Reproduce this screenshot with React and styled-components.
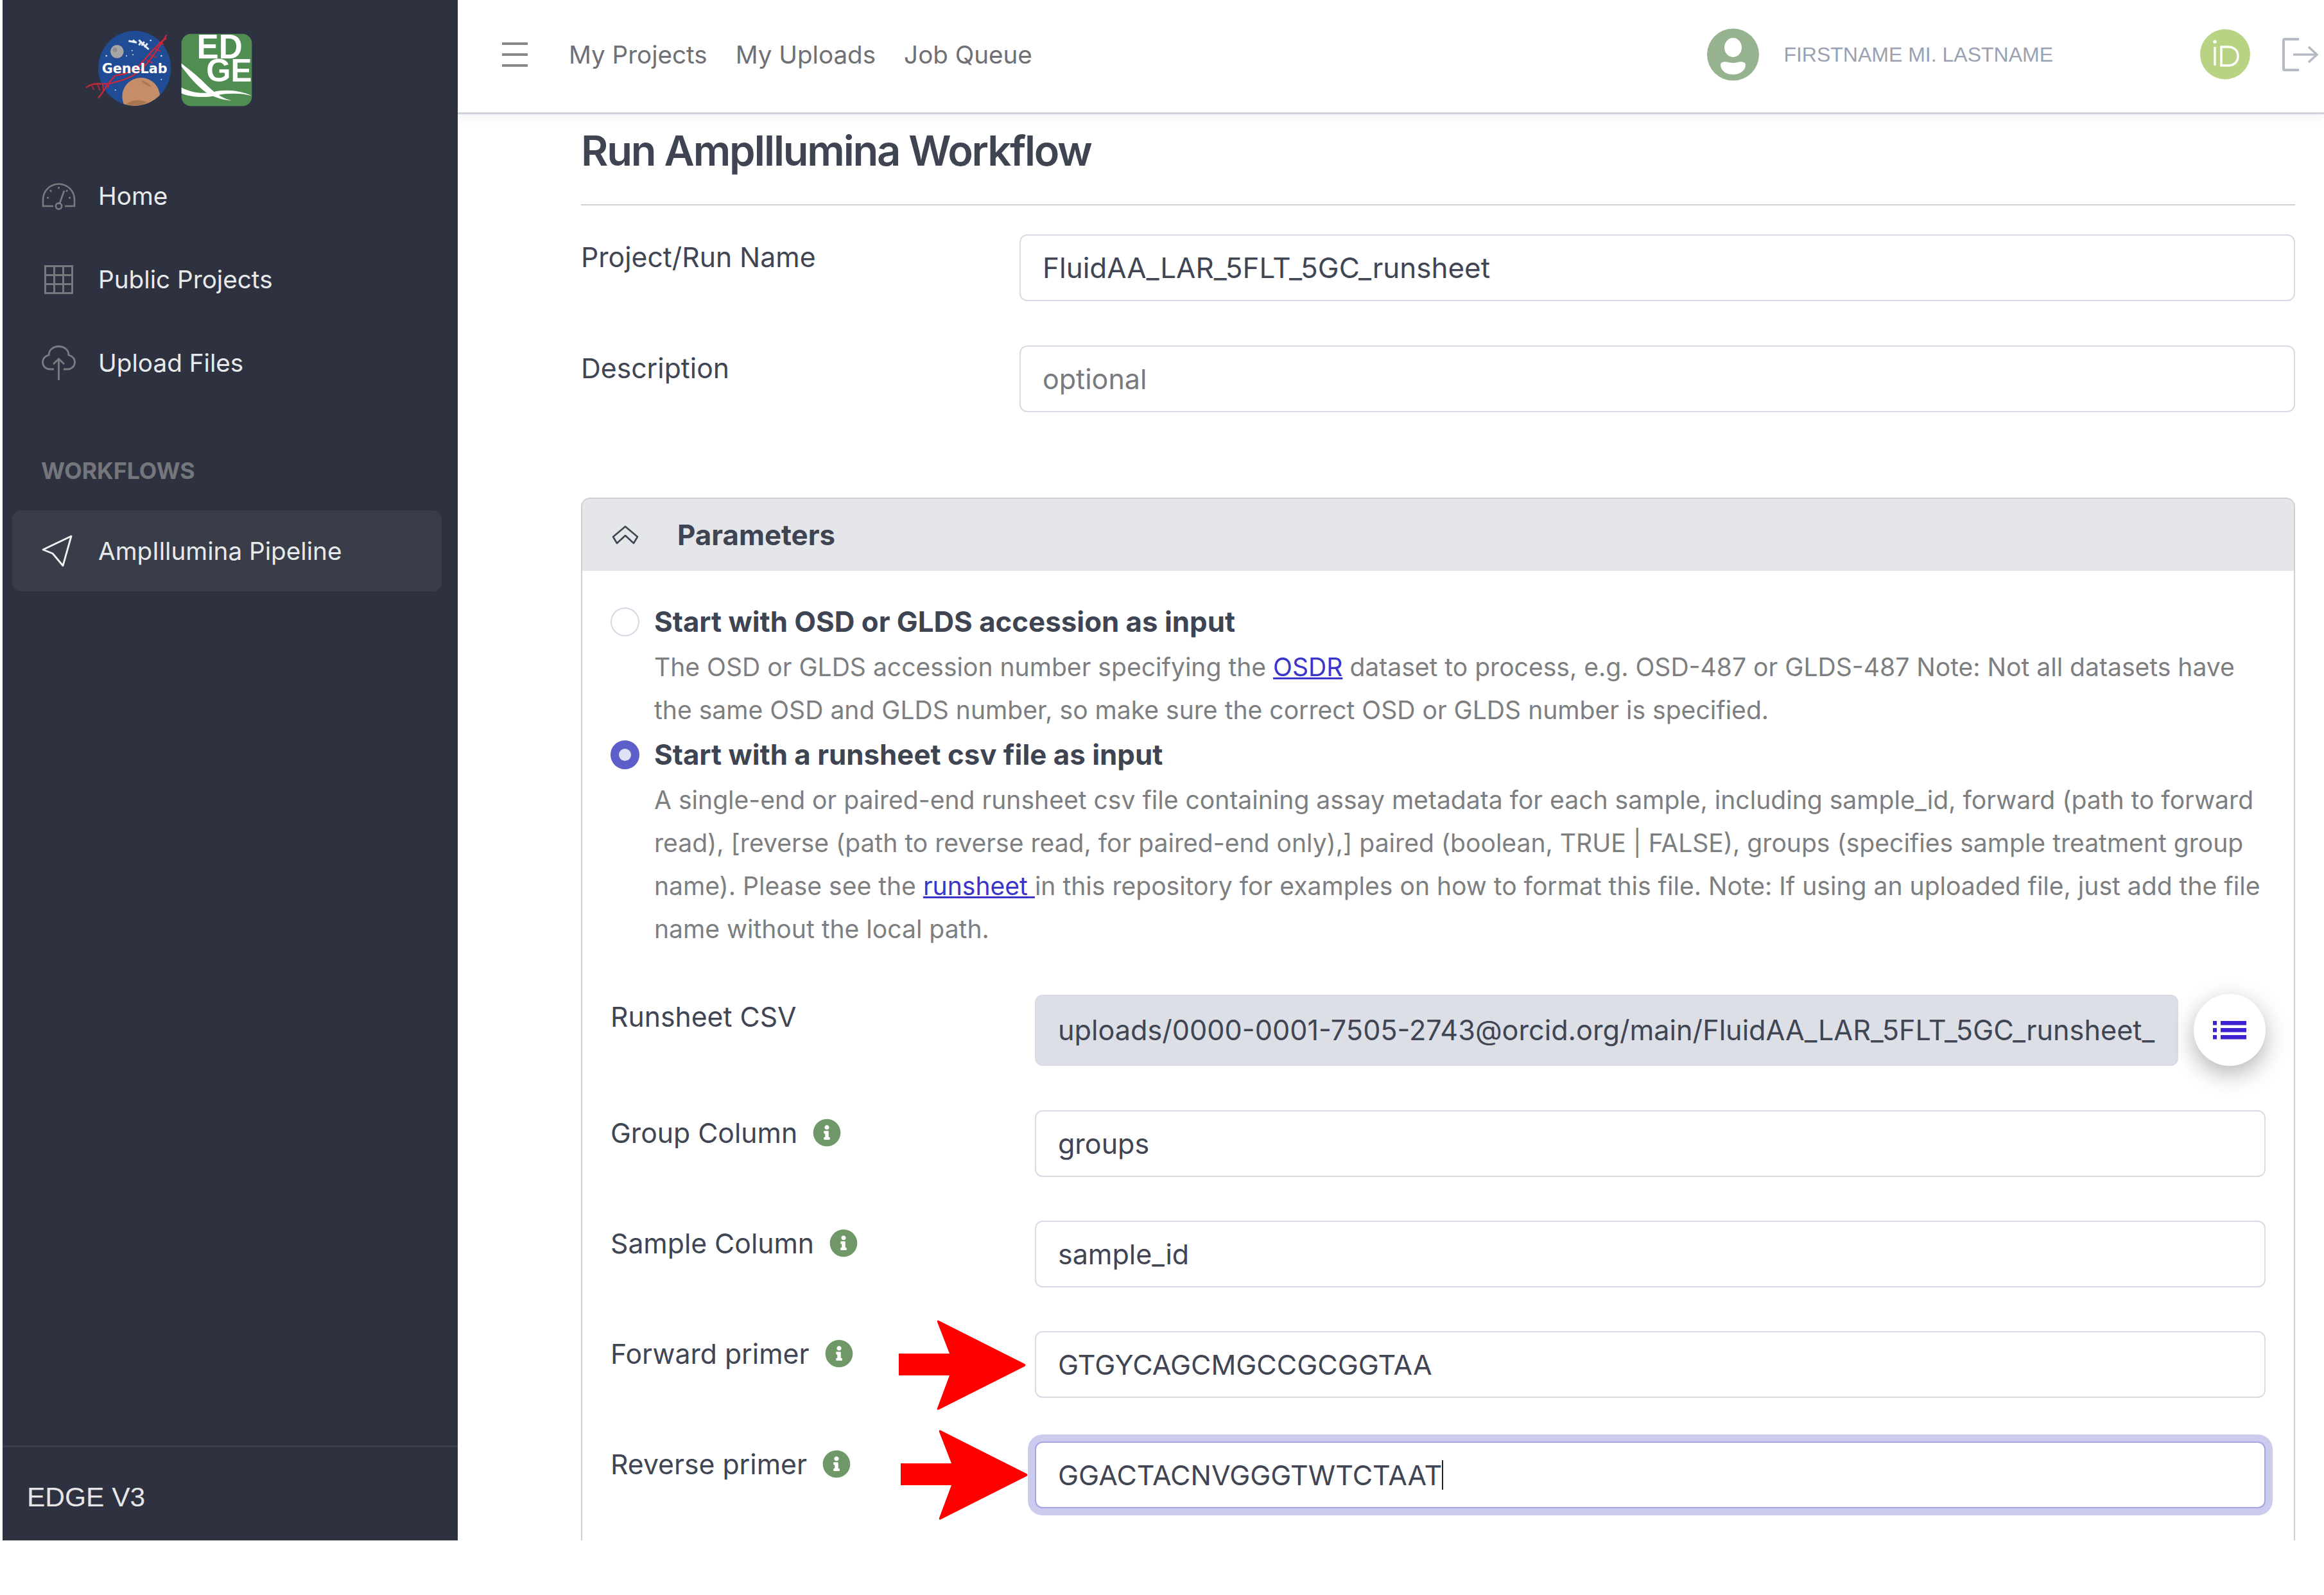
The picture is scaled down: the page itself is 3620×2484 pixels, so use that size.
import React from "react";
import styled, { createGlobalStyle } from "styled-components";
import { FaInfoCircle } from "react-icons/fa";

const Global = createGlobalStyle`
  html, body { margin: 0; padding: 0; background: #fff; }
  body { font-family: Inter, "Liberation Sans", sans-serif; }
`;

const Shell = styled.div`
  display: flex;
  height: 2399px;
  width: 3616px;
  margin-left: 4px;
  overflow: hidden;
`;

const Sidebar = styled.aside`
  width: 709px;
  flex: none;
  background: #2e3240;
  display: flex;
  flex-direction: column;
`;

const LogoRow = styled.div`
  display: flex;
  align-items: flex-start;
  gap: 14px;
  padding: 47px 0 0 129px;
  height: 195px;
  box-sizing: border-box;
`;

const EdgeLogoSvg = styled.svg`
  margin-top: 5px;
`;

const NavList = styled.nav`
  display: flex;
  flex-direction: column;
  gap: 4px;
  padding: ${(p) => (p.$flush ? 0 : 47)}px 25px 0 15px;
`;

const NavItem = styled.div`
  height: 126px;
  display: flex;
  align-items: center;
  gap: 35px;
  padding-left: 46px;
  border-radius: 14px;
  font-size: 38.7px;
  color: #e8e9eb;
  background: ${(p) => (p.$active ? "#383d49" : "transparent")};
`;

const NavIcon = styled.span`
  width: 53px;
  flex: none;
  display: flex;
  justify-content: ${(p) => p.$align || "center"};
`;

const SectionTitle = styled.div`
  font-size: 35.7px;
  font-weight: 700;
  color: #74767c;
  line-height: 40px;
  padding: 85px 0 42px 60px;
`;

const SidebarFooter = styled.div`
  margin-top: auto;
  height: 148px;
  box-sizing: border-box;
  border-top: 3px solid #3a3f4d;
  padding: 10px 0 0 38px;
  display: flex;
  align-items: center;
  font-family: "Liberation Sans", sans-serif;
  font-size: 42.5px;
  color: #e6e6e8;
`;

const Main = styled.main`
  flex: 1;
  min-width: 0;
  display: flex;
  flex-direction: column;
`;

const TopBar = styled.header`
  height: 178px;
  box-sizing: border-box;
  flex: none;
  border-bottom: 3px solid #cdd2dc;
  box-shadow: 0 6px 18px rgba(0, 0, 0, 0.05);
  display: flex;
  align-items: center;
  padding: 0 8px 6px 69px;
  background: #fff;
  position: relative;
  z-index: 2;
`;

const Hamburger = styled.div`
  width: 40px;
  height: 38px;
  flex: none;
  display: flex;
  flex-direction: column;
  justify-content: space-between;
  margin-right: 64px;
  & > i { display: block; height: 4px; background: #85878b; }
`;

const TopNav = styled.div`
  display: flex;
  gap: 44px;
  font-size: 38.6px;
  color: #6e7075;
`;

const UserBlock = styled.div`
  margin-left: auto;
  display: flex;
  align-items: center;
`;

const UserName = styled.span`
  font-family: "Liberation Sans", sans-serif;
  font-size: 32px;
  color: #9aa1b0;
  margin: 2px 229px 0 38px;
`;

const LogoutIcon = styled.svg`
  margin-left: 50px;
`;

const Content = styled.div`
  flex: 1;
  min-height: 0;
  overflow: hidden;
  padding: 0 45px 0 192px;
`;

const Title = styled.h1`
  margin: 0 0 45px;
  height: 142px;
  box-sizing: border-box;
  font-size: 65px;
  letter-spacing: -2.2px;
  line-height: 114px;
  font-weight: 600;
  color: #3e4451;
  border-bottom: 2px solid #d2d2d2;
`;

const Row = styled.div`
  display: grid;
  position: relative;
  grid-template-columns: ${(p) => p.$labelWidth}px 1fr;
  margin-bottom: ${(p) => p.$after ?? 69}px;
`;

const Label = styled.label`
  display: flex;
  align-items: center;
  height: 70px;
  gap: ${(p) => p.$gap || 0}px;
  font-size: 42.7px;
  color: #3f4553;
`;

const Field = styled.div`
  height: 104px;
  box-sizing: border-box;
  border: 2px solid ${(p) => (p.$focus ? "#a3a6e3" : "#d8dbe6")};
  border-radius: 12px;
  display: flex;
  align-items: center;
  padding: 0 34px;
  font-size: ${(p) => p.$size || 43}px;
  color: ${(p) => (p.$placeholder ? "#787a80" : "#3f4553")};
  background: #fff;
  box-shadow: ${(p) => (p.$focus ? "0 0 0 11px #cbcbee" : "none")};
`;

const Caret = styled.span`
  display: inline-block;
  width: 2px;
  height: 46px;
  background: #222;
`;

const Card = styled.section`
  border: 2px solid #cfd0d3;
  border-radius: 14px 14px 0 0;
  padding-bottom: 300px;
`;

const CardHeader = styled.div`
  height: 112px;
  background: #e4e6ea;
  display: flex;
  align-items: center;
  gap: 60px;
  padding-left: 46px;
  font-size: 43.8px;
  font-weight: 700;
  color: #3e4451;
  border-radius: 12px 12px 0 0;
`;

const CardBody = styled.div`
  padding: 46px 44px 0;
`;

const RadioGroup = styled.div`
  display: flex;
  flex-direction: column;
  gap: 3px;
  margin-bottom: 68px;
`;

const RadioRow = styled.div`
  display: flex;
  gap: 23px;
`;

const Radio = styled.span`
  width: 45px;
  height: 45px;
  box-sizing: border-box;
  flex: none;
  margin-top: 11px;
  border-radius: 50%;
  background: ${(p) => (p.$checked ? "#e0e1f5" : "#fff")};
  border: ${(p) => (p.$checked ? "13px solid #5c5ec9" : "2px solid #d5d9e3")};
`;

const RadioText = styled.div`
  flex: 1;
  font-size: 39.1px;
  line-height: 67px;
  color: #7d7e80;
`;

const RadioTitle = styled.div`
  font-size: 43.8px;
  font-weight: 700;
  color: #3e4451;
  margin-bottom: 3px;
`;

const Link = styled.a`
  color: #3a35c8;
  text-decoration: underline;
`;

const FileRow = styled.div`
  display: flex;
  align-items: center;
  gap: 24px;
`;

const FileField = styled.div`
  flex: 1;
  min-width: 0;
  height: 111px;
  box-sizing: border-box;
  border: 2px solid #d9dce4;
  border-radius: 12px;
  background: #dcdfe6;
  padding: 0 34px;
  display: flex;
  align-items: center;
  font-size: 43.2px;
  color: #3f4553;
`;

const FileText = styled.span`
  display: block;
  overflow: hidden;
  white-space: nowrap;
  width: 100%;
`;

const RoundButton = styled.button`
  width: 112px;
  height: 112px;
  flex: none;
  border: 0;
  padding: 0;
  border-radius: 50%;
  background: #fff;
  box-shadow: 0 12px 36px rgba(0, 0, 0, 0.3);
  display: flex;
  align-items: center;
  justify-content: center;
`;

const Info = styled(FaInfoCircle)`
  color: #6f9767;
  flex: none;
`;

const ArrowSvg = styled.svg`
  position: absolute;
  left: ${(p) => p.$x}px;
  top: ${(p) => p.$y}px;
  z-index: 1;
`;

const GeneLabLogo = () => (
  <svg width="135" height="120" viewBox="40 50 405 360">
    <defs>
      <clipPath id="gl"><ellipse cx="270" cy="228" rx="170" ry="175" /></clipPath>
    </defs>
    <ellipse cx="270" cy="228" rx="170" ry="175" fill="#1f4c94" />
    <circle cx="188" cy="150" r="31" fill="#a5a5a5" />
    <circle cx="178" cy="142" r="10" fill="#8c8c8c" />
    <path d="M242 100l38 8M262 96l14 12M290 96l46 44M300 106l-10 14M315 104l-12 18M330 112l-14 18" stroke="#e8edf5" strokeWidth="9" fill="none" />
    <g fill="#dfe6f2">
      <circle cx="138" cy="170" r="4" /><circle cx="258" cy="145" r="3" /><circle cx="262" cy="165" r="3" />
      <circle cx="345" cy="98" r="4" /><circle cx="395" cy="170" r="4" /><circle cx="232" cy="170" r="3" />
      <circle cx="180" cy="330" r="3" /><circle cx="395" cy="280" r="3" />
    </g>
    <path d="M44 318C80 290 110 305 150 300C190 290 240 280 280 250C330 215 370 150 420 72" stroke="#c9283a" strokeWidth="7" fill="none" />
    <path d="M100 366C125 340 140 300 180 262C230 255 270 245 310 195C340 160 380 110 418 88" stroke="#c9283a" strokeWidth="7" fill="none" />
    <path d="M70 310l10 18M95 300l14 32M120 302l4 30M150 298l-6 24M325 190l30 14M342 165l30 14M362 135l30 14M382 105l24 12" stroke="#c9283a" strokeWidth="5" fill="none" />
    <g clipPath="url(#gl)">
      <circle cx="300" cy="360" r="88" fill="#c58d68" />
      <path d="M230 395q40-30 100-10q-40 30-100 10z" fill="#a87650" />
      <path d="M300 285q30 5 50 30q-30-5-50-30z" fill="#a87650" />
    </g>
    <text x="270" y="250" textAnchor="middle" fontFamily="'DejaVu Sans', sans-serif" fontWeight="700" fontSize="62" fill="#fff" textLength="306" lengthAdjust="spacingAndGlyphs">GeneLab</text>
  </svg>
);

const EdgeLogo = () => (
  <EdgeLogoSvg width="111" height="114" viewBox="488 66 334 342">
    <defs>
      <clipPath id="eg"><rect x="490" y="68" width="330" height="338" rx="44" /></clipPath>
    </defs>
    <rect x="490" y="68" width="330" height="338" rx="44" fill="#4f8e50" />
    <g clipPath="url(#eg)">
      <text x="562" y="184" fontFamily="'Liberation Sans', sans-serif" fontWeight="700" fontSize="160" fill="#fff" textLength="214" lengthAdjust="spacingAndGlyphs">ED</text>
      <text x="606" y="292" fontFamily="'Liberation Sans', sans-serif" fontWeight="700" fontSize="150" fill="#fff" textLength="214" lengthAdjust="spacingAndGlyphs">GE</text>
      <path d="M488 218C520 260 560 310 610 345C650 368 690 378 725 380C680 370 640 340 600 300C560 260 525 235 488 205Z" fill="#fff" />
      <path d="M488 318C540 345 590 350 640 340C700 325 770 335 820 358C770 345 710 345 660 355C600 370 530 365 488 345Z" fill="#fff" />
    </g>
  </EdgeLogoSvg>
);

const GaugeIcon = () => (
  <svg width="53" height="43" viewBox="0 0 53 43" fill="none" stroke="#7a7c82" strokeWidth="2.6">
    <path d="M18 37H2V27A24.5 24.5 0 0 1 51 27V37H36" />
    <circle cx="26.5" cy="37" r="4.6" />
    <path d="M28 32.5L35 13" />
    <path d="M26.5 7v3M13 12l2 2.5M40 12l-2 2.5M8 24h3M45 24h-3" />
  </svg>
);

const GridIcon = () => (
  <svg width="45" height="45" viewBox="0 0 45 45" fill="none" stroke="#76787e" strokeWidth="3">
    <rect x="1.5" y="1.5" width="42" height="42" />
    <path d="M15.5 1.5V43.5M29.5 1.5V43.5M1.5 15.5H43.5M1.5 29.5H43.5" />
  </svg>
);

const CloudIcon = () => (
  <svg width="53" height="54" viewBox="0 0 53 54" fill="none" stroke="#7a7c82" strokeWidth="2.8">
    <path d="M19 37H13C6 37 1.5 32 1.5 26C1.5 20 6 16 11 15C11 7 18 1.5 26.5 1.5C35 1.5 42 7 42 15C47 16 51.5 20 51.5 26C51.5 32 47 37 40 37H34" />
    <path d="M26.5 54V21M18 29L26.5 21L35 29" />
  </svg>
);

const SendIcon = () => (
  <svg width="48" height="50" viewBox="0 0 48 50" fill="none" stroke="#f2f2f3" strokeWidth="2.8" strokeLinejoin="round">
    <path d="M46 2L2 23L17 29L33 48Z" />
  </svg>
);

const Avatar = () => (
  <svg width="81" height="82" viewBox="0 0 81 82">
    <circle cx="40.5" cy="41" r="40.5" fill="#97b28f" />
    <ellipse cx="40.5" cy="30" rx="13.5" ry="15" fill="#fff" />
    <path d="M22 54C28 50 34 54 40.5 54C47 54 53 50 59 54C62 58 58 72 40.5 72C23 72 19 58 22 54Z" fill="#fff" />
  </svg>
);

const OrcidIcon = () => (
  <svg width="78" height="79" viewBox="0 0 78 79">
    <circle cx="39" cy="39.5" r="39" fill="#b8d383" />
    <circle cx="23" cy="20" r="2.8" fill="#fff" />
    <path d="M23 28V57" stroke="#fff" strokeWidth="3.4" />
    <path d="M33 28H44C53 28 59 34 59 42.5C59 51 53 57 44 57H33Z" stroke="#fff" strokeWidth="3.4" fill="none" />
  </svg>
);

const ChevronDouble = () => (
  <svg width="42" height="30" viewBox="0 0 42 30" fill="none" stroke="#3e4451" strokeWidth="2.6" strokeLinejoin="round">
    <path d="M2 18L21 2L40 18L34 28L21 16L8 28Z" />
  </svg>
);

const ListIcon = () => (
  <svg width="52" height="29" viewBox="0 0 52 29" fill="#3c22d0">
    <rect x="0" y="0" width="6" height="6.5" /><rect x="12" y="0" width="40" height="6.5" />
    <rect x="0" y="11" width="6" height="6.5" /><rect x="12" y="11" width="40" height="6.5" />
    <rect x="0" y="22" width="6" height="6.5" /><rect x="12" y="22" width="40" height="6.5" />
  </svg>
);

const Arrow = ({ x, y }) => (
  <ArrowSvg $x={x} $y={y} width="200" height="144" viewBox="0 0 200 144">
    <path d="M0 54H79L60 5Q59 1 63 3L196 70Q199 72 196 74L63 141Q59 143 60 139L79 88H0Z" fill="#fe0000" />
  </ArrowSvg>
);

const PrimaryRow = ({ label, value, gap, focus, arrow, caret }) => (
  <Row $labelWidth={661} $after={68}>
    <Label $gap={gap}>
      {label}
      <Info size={44} />
    </Label>
    <Field $focus={focus}>
      {value}
      {caret && <Caret />}
    </Field>
    {arrow && <Arrow x={arrow[0]} y={arrow[1]} />}
  </Row>
);

export default function App() {
  return (
    <>
      <Global />
      <Shell>
        <Sidebar>
          <LogoRow>
            <GeneLabLogo />
            <EdgeLogo />
          </LogoRow>
          <NavList>
            <NavItem><NavIcon><GaugeIcon /></NavIcon>Home</NavItem>
            <NavItem><NavIcon><GridIcon /></NavIcon>Public Projects</NavItem>
            <NavItem><NavIcon><CloudIcon /></NavIcon>Upload Files</NavItem>
          </NavList>
          <SectionTitle>WORKFLOWS</SectionTitle>
          <NavList $flush>
            <NavItem $active><NavIcon $align="flex-start"><SendIcon /></NavIcon>AmpIllumina Pipeline</NavItem>
          </NavList>
          <SidebarFooter>EDGE V3</SidebarFooter>
        </Sidebar>
        <Main>
          <TopBar>
            <Hamburger><i /><i /><i /></Hamburger>
            <TopNav>
              <span>My Projects</span>
              <span>My Uploads</span>
              <span>Job Queue</span>
            </TopNav>
            <UserBlock>
              <Avatar />
              <UserName>FIRSTNAME MI. LASTNAME</UserName>
              <OrcidIcon />
              <LogoutIcon width="57" height="54" viewBox="0 0 57 54" fill="none" stroke="#b5b9c3">
                <path d="M26 3H4a2 2 0 0 0-2 2V49a2 2 0 0 0 2 2H26" strokeWidth="4" />
                <path d="M17 27H53M41 15L54 27L41 39" strokeWidth="3.4" />
              </LogoutIcon>
            </UserBlock>
          </TopBar>
          <Content>
            <Title>Run AmpIllumina Workflow</Title>
            <Row $labelWidth={683}>
              <Label>Project/Run Name</Label>
              <Field $size={44}>FluidAA_LAR_5FLT_5GC_runsheet</Field>
            </Row>
            <Row $labelWidth={683} $after={133}>
              <Label>Description</Label>
              <Field $placeholder>optional</Field>
            </Row>
            <Card>
              <CardHeader><ChevronDouble />Parameters</CardHeader>
              <CardBody>
                <RadioGroup>
                  <RadioRow>
                    <Radio />
                    <RadioText>
                      <RadioTitle>Start with OSD or GLDS accession as input</RadioTitle>
                      The OSD or GLDS accession number specifying the <Link>OSDR</Link> dataset to process, e.g. OSD-487 or GLDS-487 Note: Not all datasets have the same OSD and GLDS number, so make sure the correct OSD or GLDS number is specified.
                    </RadioText>
                  </RadioRow>
                  <RadioRow>
                    <Radio $checked />
                    <RadioText>
                      <RadioTitle>Start with a runsheet csv file as input</RadioTitle>
                      A single-end or paired-end runsheet csv file containing assay metadata for each sample, including sample_id, forward (path to forward read), [reverse (path to reverse read, for paired-end only),] paired (boolean, TRUE | FALSE), groups (specifies sample treatment group name). Please see the <Link>runsheet </Link>in this repository for examples on how to format this file. Note: If using an uploaded file, just add the file name without the local path.
                    </RadioText>
                  </RadioRow>
                </RadioGroup>
                <Row $labelWidth={661} $after={69}>
                  <Label>Runsheet CSV</Label>
                  <FileRow>
                    <FileField>
                      <FileText>uploads/0000-0001-7505-2743@orcid.org/main/FluidAA_LAR_5FLT_5GC_runsheet_</FileText>
                    </FileField>
                    <RoundButton><ListIcon /></RoundButton>
                  </FileRow>
                </Row>
                <PrimaryRow label="Group Column" value="groups" gap={24} />
                <PrimaryRow label="Sample Column" value="sample_id" gap={24} />
                <PrimaryRow label="Forward primer" value="GTGYCAGCMGCCGCGGTAA" gap={24} arrow={[449, -19]} />
                <PrimaryRow label="Reverse primer" value="GGACTACNVGGGTWTCTAAT" gap={24} focus caret arrow={[452, -20]} />
              </CardBody>
            </Card>
          </Content>
        </Main>
      </Shell>
    </>
  );
}
